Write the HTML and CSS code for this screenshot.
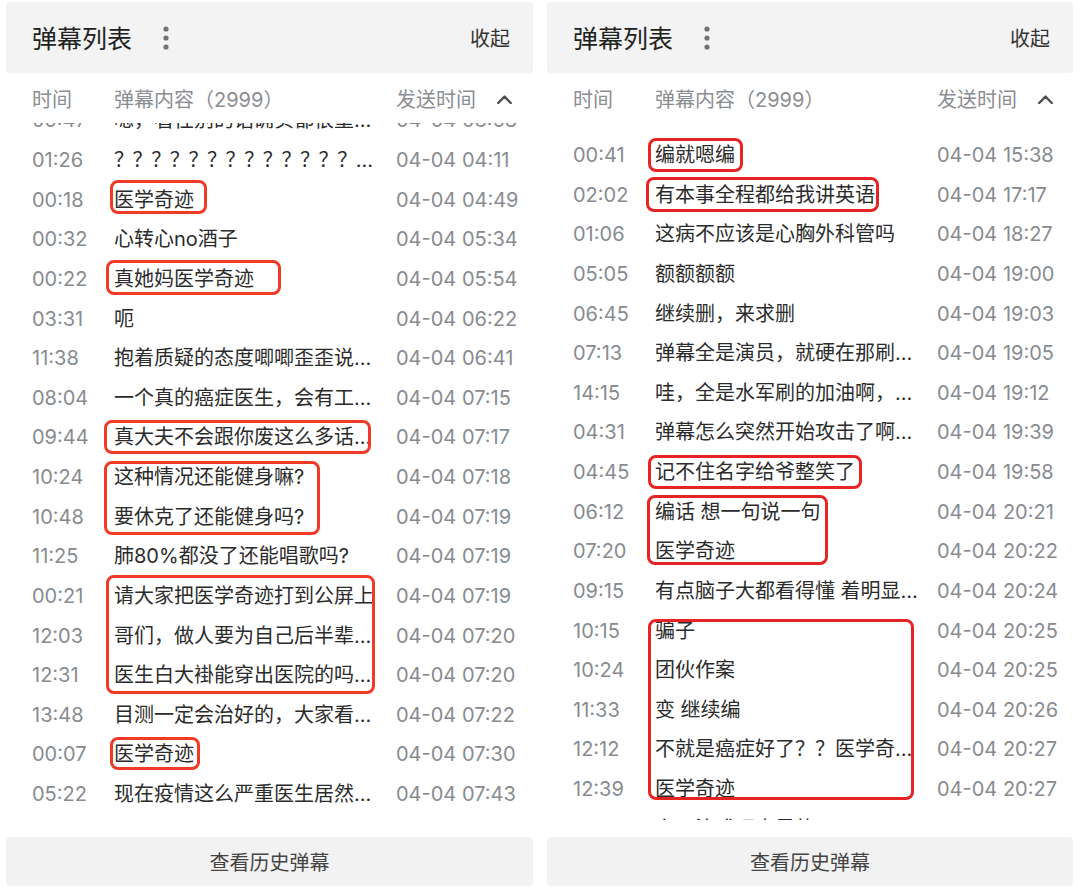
FILE: index.html
```html
<!DOCTYPE html>
<html lang="zh-CN">
<head>
<meta charset="utf-8">
<title>弹幕列表</title>
<link rel="stylesheet" href="styles.css">
</head>
<body>
<div class="page">
  <section class="panel left">
    <header class="head">
      <span class="title">弹幕列表</span>
      <svg class="more" width="8" height="26" viewBox="0 0 8 26"><circle cx="4" cy="4" r="2.6"/><circle cx="4" cy="13" r="2.6"/><circle cx="4" cy="22" r="2.6"/></svg>
      <span class="fold">收起</span>
    </header>
    <div class="cols">
      <span>时间</span>
      <span>弹幕内容（2999）</span>
      <span class="sendh">发送时间<svg class="caret" width="15" height="9" viewBox="0 0 15 9"><polyline points="1.2,8 7.5,1.6 13.8,8"/></svg></span>
    </div>
    <div class="list">
      <div class="rows rows-left">
        <div class="row"><span class="t">05:47</span><span class="c">嗯，看性别的话确实都很重…</span><span class="s">04-04 03:58</span></div>
        <div class="row"><span class="t">01:26</span><span class="c"><span class="qq">？？？？？？？？？？？？？</span>…</span><span class="s">04-04 04:11</span></div>
        <div class="row"><span class="t">00:18</span><span class="c">医学奇迹</span><span class="s">04-04 04:49</span></div>
        <div class="row"><span class="t">00:32</span><span class="c">心转心no酒子</span><span class="s">04-04 05:34</span></div>
        <div class="row"><span class="t">00:22</span><span class="c">真她妈医学奇迹</span><span class="s">04-04 05:54</span></div>
        <div class="row"><span class="t">03:31</span><span class="c">呃</span><span class="s">04-04 06:22</span></div>
        <div class="row"><span class="t">11:38</span><span class="c">抱着质疑的态度唧唧歪歪说…</span><span class="s">04-04 06:41</span></div>
        <div class="row"><span class="t">08:04</span><span class="c">一个真的癌症医生，会有工…</span><span class="s">04-04 07:15</span></div>
        <div class="row"><span class="t">09:44</span><span class="c">真大夫不会跟你废这么多话…</span><span class="s">04-04 07:17</span></div>
        <div class="row"><span class="t">10:24</span><span class="c">这种情况还能健身嘛?</span><span class="s">04-04 07:18</span></div>
        <div class="row"><span class="t">10:48</span><span class="c">要休克了还能健身吗?</span><span class="s">04-04 07:19</span></div>
        <div class="row"><span class="t">11:25</span><span class="c">肺80%都没了还能唱歌吗?</span><span class="s">04-04 07:19</span></div>
        <div class="row"><span class="t">00:21</span><span class="c">请大家把医学奇迹打到公屏上</span><span class="s">04-04 07:19</span></div>
        <div class="row"><span class="t">12:03</span><span class="c">哥们，做人要为自己后半辈…</span><span class="s">04-04 07:20</span></div>
        <div class="row"><span class="t">12:31</span><span class="c">医生白大褂能穿出医院的吗…</span><span class="s">04-04 07:20</span></div>
        <div class="row"><span class="t">13:48</span><span class="c">目测一定会治好的，大家看…</span><span class="s">04-04 07:22</span></div>
        <div class="row"><span class="t">00:07</span><span class="c">医学奇迹</span><span class="s">04-04 07:30</span></div>
        <div class="row"><span class="t">05:22</span><span class="c">现在疫情这么严重医生居然…</span><span class="s">04-04 07:43</span></div>
      </div>
      <div class="mark mark-l mark-l1"></div>
      <div class="mark mark-l mark-l2"></div>
      <div class="mark mark-l mark-l3"></div>
      <div class="mark mark-l mark-l4"></div>
      <div class="mark mark-l mark-l5"></div>
      <div class="mark mark-l mark-l6"></div>
    </div>
    <button class="foot" type="button">查看历史弹幕</button>
  </section>

  <section class="panel right">
    <header class="head">
      <span class="title">弹幕列表</span>
      <svg class="more" width="8" height="26" viewBox="0 0 8 26"><circle cx="4" cy="4" r="2.6"/><circle cx="4" cy="13" r="2.6"/><circle cx="4" cy="22" r="2.6"/></svg>
      <span class="fold">收起</span>
    </header>
    <div class="cols">
      <span>时间</span>
      <span>弹幕内容（2999）</span>
      <span class="sendh">发送时间<svg class="caret" width="15" height="9" viewBox="0 0 15 9"><polyline points="1.2,8 7.5,1.6 13.8,8"/></svg></span>
    </div>
    <div class="list">
      <div class="rows rows-right">
        <div class="row"><span class="t">00:41</span><span class="c">编就嗯编</span><span class="s">04-04 15:38</span></div>
        <div class="row"><span class="t">02:02</span><span class="c">有本事全程都给我讲英语</span><span class="s">04-04 17:17</span></div>
        <div class="row"><span class="t">01:06</span><span class="c">这病不应该是心胸外科管吗</span><span class="s">04-04 18:27</span></div>
        <div class="row"><span class="t">05:05</span><span class="c">额额额额</span><span class="s">04-04 19:00</span></div>
        <div class="row"><span class="t">06:45</span><span class="c">继续删，来求删</span><span class="s">04-04 19:03</span></div>
        <div class="row"><span class="t">07:13</span><span class="c">弹幕全是演员，就硬在那刷…</span><span class="s">04-04 19:05</span></div>
        <div class="row"><span class="t">14:15</span><span class="c">哇，全是水军刷的加油啊，…</span><span class="s">04-04 19:12</span></div>
        <div class="row"><span class="t">04:31</span><span class="c">弹幕怎么突然开始攻击了啊…</span><span class="s">04-04 19:39</span></div>
        <div class="row"><span class="t">04:45</span><span class="c">记不住名字给爷整笑了</span><span class="s">04-04 19:58</span></div>
        <div class="row"><span class="t">06:12</span><span class="c">编话 想一句说一句</span><span class="s">04-04 20:21</span></div>
        <div class="row"><span class="t">07:20</span><span class="c">医学奇迹</span><span class="s">04-04 20:22</span></div>
        <div class="row"><span class="t">09:15</span><span class="c">有点脑子大都看得懂 着明显…</span><span class="s">04-04 20:24</span></div>
        <div class="row"><span class="t">10:15</span><span class="c">骗子</span><span class="s">04-04 20:25</span></div>
        <div class="row"><span class="t">10:24</span><span class="c">团伙作案</span><span class="s">04-04 20:25</span></div>
        <div class="row"><span class="t">11:33</span><span class="c">变 继续编</span><span class="s">04-04 20:26</span></div>
        <div class="row"><span class="t">12:12</span><span class="c">不就是癌症好了？？医学奇…</span><span class="s">04-04 20:27</span></div>
        <div class="row"><span class="t">12:39</span><span class="c">医学奇迹</span><span class="s">04-04 20:27</span></div>
        <div class="row"><span class="t">13:02</span><span class="c">六一演戏呢真是的？？？？</span><span class="s">04-04 20:29</span></div>
      </div>
      <div class="mark mark-r mark-r1"></div>
      <div class="mark mark-r mark-r2"></div>
      <div class="mark mark-r mark-r3"></div>
      <div class="mark mark-r mark-r4"></div>
      <div class="mark mark-r mark-r5"></div>
    </div>
    <button class="foot" type="button">查看历史弹幕</button>
  </section>
</div>
</body>
</html>
```
FILE: styles.css
```css
* { box-sizing: border-box; }

body {
  margin: 0;
  background: #ffffff;
  font-family: "Inter", "Noto Sans CJK SC", sans-serif;
}

.page {
  display: flex;
  gap: 14px;
  padding: 2px 7px 0 6px;
}

.panel {
  width: 527px;
  display: flex;
  flex-direction: column;
}

.panel.right {
  width: 526px;
}

.head {
  height: 71px;
  background: #f3f3f3;
  border-radius: 4px;
  display: flex;
  align-items: center;
  padding: 0 23px 0 26px;
}

.title {
  font-family: "Noto Sans CJK SC", sans-serif;
  font-size: 25px;
  color: #222222;
  line-height: 1;
}

.more {
  margin-left: 30px;
  fill: #737373;
}

.fold {
  margin-left: auto;
  font-family: "Noto Sans CJK SC", sans-serif;
  font-size: 20px;
  color: #333333;
  line-height: 1;
}

.cols {
  height: 50px;
  display: grid;
  grid-template-columns: 82px 282px 1fr;
  align-items: center;
  padding-left: 26px;
  padding-top: 3px;
  font-size: 20px;
  line-height: 1;
  color: #8a8d91;
}

.sendh {
  display: flex;
  align-items: center;
  gap: 21px;
}

.caret {
  fill: none;
  stroke: #4f4f4f;
  stroke-width: 2.4;
  stroke-linecap: round;
  stroke-linejoin: round;
}

.list {
  height: 697px;
  overflow: hidden;
  position: relative;
}

.rows-left {
  margin-top: -22.4px;
}

.rows-right {
  margin-top: 12.2px;
}

.row {
  height: 39.625px;
  display: grid;
  grid-template-columns: 82px 282px 1fr;
  align-items: center;
  padding-left: 26px;
  font-size: 20px;
  line-height: 1;
}

.t, .s {
  color: #878b90;
  white-space: nowrap;
}

.c {
  color: #2b2b2b;
  white-space: nowrap;
  line-height: 1.2;
}

.qq {
  letter-spacing: -1.4px;
}

.mark {
  position: absolute;
  border: 3px solid #ee3a26;
  border-radius: 8px;
  pointer-events: none;
}

.mark-r {
  border-color: #e62424;
}

.mark-l1 { left: 104px; top: 57px;  width: 97px;  height: 34px; }
.mark-l2 { left: 100px; top: 137px; width: 175px; height: 35px; }
.mark-l3 { left: 98px;  top: 297px; width: 267px; height: 34px; }
.mark-l4 { left: 98px;  top: 338px; width: 216px; height: 74px; }
.mark-l5 { left: 100px; top: 452px; width: 269px; height: 119px; }
.mark-l6 { left: 104px; top: 614px; width: 90px;  height: 33px; }

.mark-r1 { left: 101px; top: 15px;  width: 95px;  height: 34px; }
.mark-r2 { left: 99px;  top: 54px;  width: 233px; height: 35px; }
.mark-r3 { left: 101px; top: 332px; width: 214px; height: 34px; }
.mark-r4 { left: 100px; top: 372px; width: 181px; height: 70px; }
.mark-r5 { left: 101px; top: 496px; width: 266px; height: 181px; }

.foot {
  margin-top: 17px;
  height: 49px;
  width: 100%;
  border: 0;
  background: #f2f2f2;
  border-radius: 4px;
  display: flex;
  align-items: center;
  justify-content: center;
  font-family: "Noto Sans CJK SC", sans-serif;
  font-size: 20px;
  color: #444444;
  padding: 0;
}
```
